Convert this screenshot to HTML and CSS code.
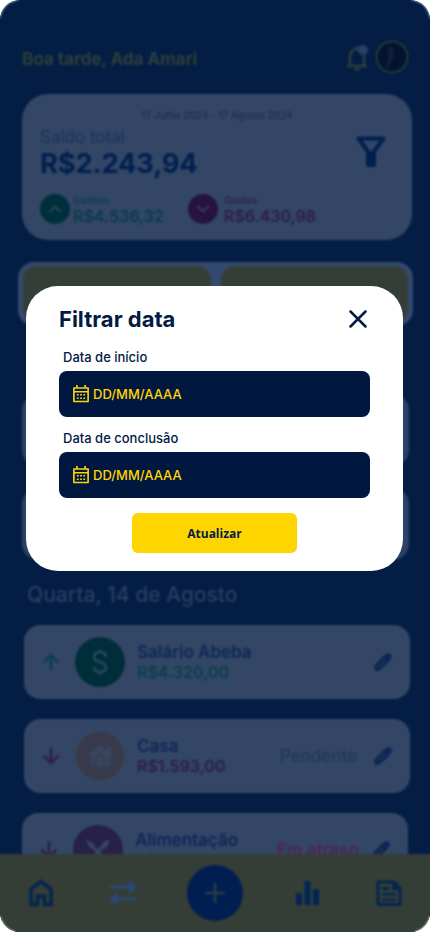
FILE: index.html
```html
<!DOCTYPE html>
<html lang="pt-BR">
<head>
<meta charset="utf-8">
<meta name="viewport" content="width=device-width, initial-scale=1">
<title>Filtrar data</title>
<link rel="stylesheet" href="styles.css">
</head>
<body>
<svg class="defs" aria-hidden="true">
  <symbol id="pencil" viewBox="0 0 24 24"><path d="M3.500 17.300V20.500h3.300L17.900 9.900l-3.800-3.800z" fill="none" stroke="currentColor" stroke-width="4" stroke-linejoin="round"/><path d="M12.500 6l5.500 5.500 4.500-4.500a1.800 1.800 0 0 0 0-2.500L19.500 1.500a1.800 1.800 0 0 0-2.500 0z" fill="currentColor"/></symbol>
  <symbol id="calendar" viewBox="0 0 24 24"><path d="M2.500 4h19v18h-19zM2.500 9h19M6.500 0V4M17.500 0V4" fill="none" stroke="currentColor" stroke-width="2.200" stroke-linejoin="round"/><path d="M6.500 12h2.400v2H6.500zm4.300 0h2.400v2h-2.400zm4.300 0h2.400v2h-2.400zm-8.600 4.500h2.400v2H6.500zm4.300 0h2.400v2h-2.400zm4.300 0h2.400v2h-2.400z" fill="currentColor"/></symbol>
  <symbol id="down" viewBox="0 0 24 24"><path d="M12 2v18M3 11.500l9 9 9-9" fill="none" stroke="currentColor" stroke-width="3"/></symbol>
  <symbol id="up" viewBox="0 0 24 24"><path d="M12 22V4M3 12.500l9-9 9 9" fill="none" stroke="currentColor" stroke-width="3"/></symbol>
</svg>
<div class="phone">
  <main class="content">
    <header class="top">
      <h1 class="greeting">Boa tarde, Ada Amari</h1>
      <svg class="bell" viewBox="0 0 24 28"><path d="M2 23h20M5 22V13a7 7 0 0 1 14 0v9M12 3v3" fill="none" stroke="#2c3f3c" stroke-width="2.500"/><path d="M9 25h6a3 3 0 0 1-6 0z" fill="#2c3f3c"/><circle cx="18" cy="7" r="5" fill="#2b3f68"/></svg>
      <svg class="avatar" viewBox="0 0 34 34"><circle cx="17" cy="17" r="15.500" fill="#02132f" stroke="#233a3c" stroke-width="2"/><path d="M10 27l4-9-1-6 3-4 3 3-1 6-3 5-2 6z" fill="#12213f"/><circle cx="15" cy="9" r="2.500" fill="#1b193c"/></svg>
    </header>
    <section class="balance">
      <p class="period">17 Julho 2024 - 17 Agosto 2024</p>
      <div class="balance-row">
        <div>
          <p class="balance-label">Saldo total</p>
          <p class="balance-value">R$2.243,94</p>
        </div>
        <svg class="funnel" viewBox="0 0 30 32"><path d="M2.500 2.500h25L18 15.500V29h-6V15.500z" fill="none" stroke="#001f4f" stroke-width="4" stroke-linejoin="round"/><path d="M11 15h8v15h-8z" fill="#001f4f"/></svg>
      </div>
      <div class="flows">
        <div class="flow gain">
          <svg viewBox="0 0 30 30"><circle cx="15" cy="15" r="15" fill="#002f3c"/><path d="M9.500 18l5.500-5.500 5.500 5.500" fill="none" stroke="#244858" stroke-width="2"/></svg>
          <p><span>Ganhos</span><strong>R$4.536,32</strong></p>
        </div>
        <div class="flow spend">
          <svg viewBox="0 0 30 30"><circle cx="15" cy="15" r="15" fill="#251340"/><path d="M9.500 12l5.500 5.500 5.500-5.500" fill="none" stroke="#3d375c" stroke-width="2"/></svg>
          <p><span>Gastos</span><strong>R$6.430,98</strong></p>
        </div>
      </div>
    </section>
    <div class="tabs"><span></span><span></span></div>
    <div class="blank"></div>
    <div class="blank second"></div>
    <h2 class="day">Quarta, 14 de Agosto</h2>
    <ul class="entries">
      <li class="entry">
        <svg class="arrow gain-ink"><use href="#up"/></svg>
        <svg class="badge" viewBox="0 0 50 50"><circle cx="25" cy="25" r="25" fill="#002d3a"/><path d="M31 20c0-3-2-5-6-5s-6 2-6 5 2 4 6 5 6 2 6 5-2 5-6 5-6-2-6-5M25 13v3M25 34v4" fill="none" stroke="#28495b" stroke-width="2.500"/></svg>
        <p class="entry-text"><strong>Salário Abeba</strong><span class="gain-ink">R$4.320,00</span></p>
        <svg class="edit"><use href="#pencil"/></svg>
      </li>
      <li class="entry">
        <svg class="arrow loss-ink"><use href="#down"/></svg>
        <svg class="badge" viewBox="0 0 50 50"><circle cx="25" cy="25" r="24.500" fill="#363a4c" stroke="#41424f"/><path d="M12 25l12-11 8 6v-5h4v8l3 3-4 1v8H16v-9z" fill="#38455d"/><path d="M21 34v-7l4-4 4 4v7" fill="none" stroke="#353b50" stroke-width="2"/></svg>
        <p class="entry-text"><strong>Casa</strong><span class="loss-ink">R$1.593,00</span></p>
        <span class="status">Pendente</span>
        <svg class="edit"><use href="#pencil"/></svg>
      </li>
      <li class="entry last">
        <svg class="arrow loss-ink"><use href="#down"/></svg>
        <svg class="badge" viewBox="0 0 50 50"><circle cx="25" cy="25" r="25" fill="#272049"/><path d="M15 17l20 20M34 17L15 37" stroke="#384668" stroke-width="3"/><path d="M13 15l8 4 1 6-5-2zM29 24c-2-4 2-9 7-9 1 4-3 9-7 9z" fill="#384668"/></svg>
        <p class="entry-text"><strong>Alimentação</strong><span class="loss-ink">R$1.250,00</span></p>
        <span class="status late">Em atraso</span>
        <svg class="edit"><use href="#pencil"/></svg>
      </li>
    </ul>
  </main>
  <nav class="nav" aria-label="Principal">
    <a href="#" aria-label="Início"><svg viewBox="0 0 28 28"><path d="M4 25.500V10l10-7.500L24 10v15.500h-6.500V17h-7v8.500z" fill="none" stroke="#032452" stroke-width="3.500"/></svg></a>
    <a href="#" aria-label="Transações"><svg viewBox="0 0 28 28"><path d="M3 8h23M29 20H6" fill="none" stroke="#2c4776" stroke-width="3"/><path d="M22 1l8 7-8 7zM10 13l-8 7 8 7z" fill="#2c4776"/></svg></a>
    <a href="#" class="add" aria-label="Adicionar"><svg viewBox="0 0 28 28"><path d="M14 4v20M4 14h20" stroke="#263e42" stroke-width="2.500"/></svg></a>
    <a href="#" aria-label="Relatórios"><svg viewBox="0 0 28 28"><path d="M1 14h6v12H1zm8.500-12h6v24h-6zm8.500 8h6v16h-6z" fill="#032452"/></svg></a>
    <a href="#" aria-label="Extrato"><svg viewBox="0 0 28 28"><path d="M3 3h16l6 6v16.500H3z" fill="none" stroke="#032452" stroke-width="3" stroke-linejoin="round"/><path d="M17 3l8 8h-8zM7 8h7v3H7zM7 14h14v2.500H7zm0 5.500h14V22H7z" fill="#032452"/></svg></a>
  </nav>
  <div class="overlay">
    <form class="dialog" role="dialog" aria-labelledby="dialog-title">
      <div class="dialog-head">
        <h2 id="dialog-title">Filtrar data</h2>
        <button type="button" class="close" aria-label="Fechar"><svg viewBox="0 0 18 18"><path d="M1.500 1.500l15 15M16.500 1.500l-15 15" stroke="#021b44" stroke-width="2.500" stroke-linecap="round"/></svg></button>
      </div>
      <label for="start">Data de início</label>
      <div class="field"><svg><use href="#calendar"/></svg><input id="start" type="text" placeholder="DD/MM/AAAA"></div>
      <label for="end">Data de conclusão</label>
      <div class="field"><svg><use href="#calendar"/></svg><input id="end" type="text" placeholder="DD/MM/AAAA"></div>
      <button type="submit" class="submit">Atualizar</button>
    </form>
  </div>
</div>
</body>
</html>
```
FILE: styles.css
```css
* { box-sizing: border-box; }
body, h1, h2, p, ul { margin: 0; padding: 0; }
body { background: #fff; font-family: Inter, "Open Sans", sans-serif; color: #021b44; }
ul { list-style: none; }
svg { display: block; flex: none; }
.defs { position: absolute; width: 0; height: 0; }

.phone { position: relative; display: flex; flex-direction: column; height: 100vh; overflow: hidden; border-radius: 20px; background: #031d44; }
.content { flex: 1; min-height: 0; overflow: hidden; padding: 40px 18px 0 22px; }

.top { display: flex; align-items: center; height: 34px; margin-bottom: 20px; }
.greeting { flex: 1; font-size: 17px; font-weight: 700; color: #2c3f3c; padding-top: 3px; }
.bell { width: 24px; height: 28px; margin-right: 6px; }
.avatar { width: 34px; height: 34px; margin-right: 3px; }

.balance { height: 146px; padding: 15px 26px 0 18px; border-radius: 26px; background: #334666; }
.period { font-size: 10px; line-height: 12px; text-align: center; font-weight: 500; color: #1c3055; padding-left: 8px; }
.balance-row { display: flex; justify-content: space-between; align-items: center; margin-top: 6px; }
.balance-label { font-size: 17px; line-height: 20px; color: #1c3358; }
.balance-value { font-size: 27px; line-height: 34px; font-weight: 700; color: #001f4f; }
.funnel { width: 30px; height: 32px; margin-top: -4px; }
.flows { display: flex; margin-top: 13px; }
.flow { display: flex; width: 148px; gap: 3px; }
.flow svg { width: 30px; height: 30px; }
.flow span { display: block; font-size: 10px; line-height: 13px; font-weight: 500; }
.flow strong { display: block; font-size: 16px; line-height: 18px; font-weight: 600; }
.spend { gap: 6px; }
.gain { color: #093b49; }
.spend { color: #2b1d48; }

.tabs { display: flex; gap: 10px; height: 64px; margin: 22px -1px 0 -4px; padding: 4px 5px; border-radius: 16px; background: #33496e; }
.tabs span { flex: 1; border-radius: 14px; background: #343e36; }
.blank { height: 72px; margin: 68px 3px 0 0; border-radius: 16px; background: #2b4165; }
.second { margin-top: 22px; }

.day { margin: 22px 0 0 5px; font-size: 21px; line-height: 26px; font-weight: 500; color: #293e62; }
.entries { display: grid; gap: 20px; margin-top: 17px; padding: 0 2px; }
.entry { display: flex; align-items: center; height: 74px; padding: 0 17px; border-radius: 16px; background: #334666; }
.last { margin: 0 2px 0 -2px; }
.arrow { width: 20px; height: 20px; }
.badge { width: 50px; height: 50px; margin: 0 12px 0 14px; }
.entry-text { flex: 1; white-space: nowrap; }
.entry-text strong, .entry-text span { display: block; font-size: 16px; line-height: 20px; font-weight: 600; }
.entry-text strong { font-size: 17px; color: #0d2855; }
.gain-ink, .entry-text .gain-ink { color: #093f4a; }
.loss-ink, .entry-text .loss-ink { color: #2d1d4c; }
.status { margin-right: 16px; font-size: 17px; font-weight: 500; color: #223858; }
.late { margin-right: 12px; font-weight: 600; color: #4d2451; }
.edit { width: 20px; height: 20px; color: #0a2652; }

.nav { display: flex; align-items: center; justify-content: space-between; height: 78px; flex: none; padding: 0 27px; background: #343e36; }
.nav svg { width: 28px; height: 28px; overflow: visible; }
.add { display: grid; place-items: center; width: 56px; height: 56px; border-radius: 50%; background: #001e51; }

.overlay { position: absolute; inset: 0; padding: 286px 27px 0 26px; backdrop-filter: blur(1px); }
.dialog { display: flex; flex-direction: column; padding: 20px 33px 18px; border-radius: 32px; background: #fff; }
.dialog-head { display: flex; justify-content: space-between; align-items: center; height: 26px; margin-bottom: 17px; }
.dialog-head h2 { font-size: 22px; line-height: 26px; font-weight: 700; }
.close { display: grid; place-items: center; width: 24px; height: 24px; padding: 0; border: 0; background: none; }
.close svg { width: 18px; height: 18px; }
.dialog label { padding-left: 4px; font-size: 13px; line-height: 16px; font-weight: 500; margin-bottom: 6px; }
.field { display: flex; align-items: center; gap: 3px; height: 46px; margin-bottom: 13px; padding: 0 13px; border-radius: 8px; background: #001740; color: #ffd500; }
.field svg { width: 18px; height: 18px; }
.field input { flex: 1; min-width: 0; padding: 0; border: 0; outline: 0; background: none; color: #ffd500; font: 500 13px Inter, sans-serif; }
.field input::placeholder { color: #ffd500; opacity: 1; }
.submit { align-self: center; width: 165px; height: 40px; margin-top: 2px; border: 0; border-radius: 6px; background: #ffd500; color: #021b44; font: 700 12px "Open Sans", sans-serif; }
```
